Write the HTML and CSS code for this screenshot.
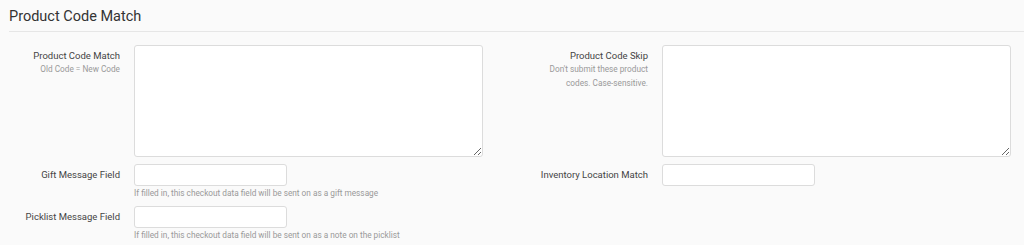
FILE: index.html
```html
<!DOCTYPE html>
<html>
<head>
	<link rel="stylesheet" href="styles.css">
</head>
<body>
    <div class="panel">
        <h2 class="panel_title">Product Code Match</h2>
        <div class="form">
            <div class="field">
                <div class="field_label"><label>Product Code Match</label><span class="field_sub">Old Code = New Code</span></div>
                <div class="field_body"><textarea class="text_area"></textarea></div>
            </div>
            <div class="field">
                <div class="field_label"><label>Product Code Skip</label><span class="field_sub">Don't submit these product codes. Case-sensitive.</span></div>
                <div class="field_body"><textarea class="text_area"></textarea></div>
            </div>
            <div class="field">
                <div class="field_label"><label>Gift Message Field</label></div>
                <div class="field_body">
                    <input type="text" class="text_input">
                    <div class="field_help">If filled in, this checkout data field will be sent on as a gift message</div>
                </div>
            </div>
            <div class="field">
                <div class="field_label"><label>Inventory Location Match</label></div>
                <div class="field_body"><input type="text" class="text_input"></div>
            </div>
            <div class="field">
                <div class="field_label"><label>Picklist Message Field</label></div>
                <div class="field_body">
                    <input type="text" class="text_input">
                    <div class="field_help">If filled in, this checkout data field will be sent on as a note on the picklist</div>
                </div>
            </div>
        </div>
    </div>
</body>
</html>
```

FILE: styles.css
```css
		body {
			margin: 0;
			background-color: #fafafa;
			font-family: Roboto, "Liberation Sans", sans-serif;
			color: #444;
		}
		.panel {
			padding-top: 7px;
		}
		.panel_title {
			margin: 0 0 0 9px;
			padding: 0 0 5px 0;
			font-size: 14.5px;
			font-weight: normal;
			line-height: 19px;
			color: #333;
			border-bottom: 1px solid #e6e6e6;
		}
		.form {
			display: grid;
			grid-template-columns: 463px 463px;
			column-gap: 65px;
			row-gap: 7px;
			padding: 13px 0 0 20px;
		}
		.field {
			display: grid;
			grid-template-columns: 100px 349px;
			column-gap: 14px;
			align-items: start;
		}
		.field_label {
			display: flex;
			flex-direction: column;
			align-items: flex-end;
			padding-top: 5px;
			font-size: 9.5px;
			line-height: 12px;
			text-align: right;
			color: #444;
		}
		.field_label label {
			white-space: nowrap;
		}
		.field_sub {
			font-size: 8.25px;
			line-height: 14px;
			color: #999;
		}
		.field_body {
			display: flex;
			flex-direction: column;
		}
		.text_area {
			box-sizing: border-box;
			width: 349px;
			height: 112px;
			margin: 0;
			border: 1px solid #dcdcdc;
			border-radius: 3px;
			background: #fff;
		}
		.text_input {
			box-sizing: border-box;
			width: 153px;
			height: 22px;
			margin: 0;
			border: 1px solid #dcdcdc;
			border-radius: 3px;
			background: #fff;
		}
		.field_help {
			margin-top: 1px;
			font-size: 8.25px;
			line-height: 12px;
			color: #999;
			white-space: nowrap;
		}
```
